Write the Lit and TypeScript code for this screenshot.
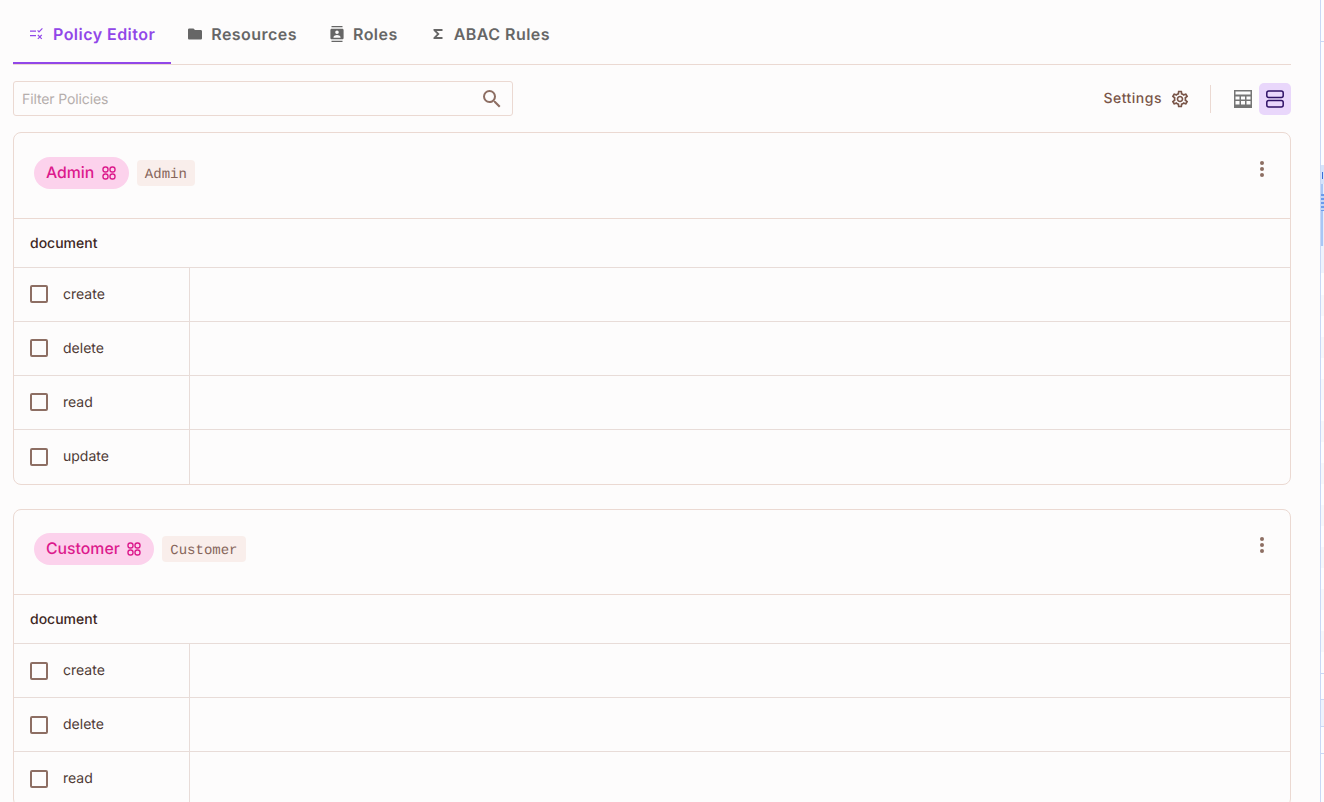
import { LitElement, html, css, svg } from "lit";
import { customElement } from "lit/decorators.js";

const policies = [
  { name: "Admin", actions: ["create", "delete", "read", "update"] },
  { name: "Customer", actions: ["create", "delete", "read"] },
];

const strip: [number, string][] = [
  [41, "w"], [1, "l"], [123, "w"], [19, "h"], [62, "b"], [27, "p"], [22, "w"],
  ...Array.from({ length: 9 }, () => [[21, "s"], [21, "w"]] as [number, string][]).flat(),
  [1, "l"], [25, "w"], [1, "l"], [26, "p"], [1, "l"], [26, "w"], [1, "l"], [70, "w"],
];

@customElement("app-root")
export class AppRoot extends LitElement {
  static styles = css`
    :host { display: block; height: 802px; overflow: hidden; background: #fdfcfc; font-family: Inter, "Liberation Sans", sans-serif; color: #3e2723; text-rendering: geometricPrecision; }
    .page { display: flex; height: 802px; }
    .main { width: 1320px; box-sizing: border-box; padding: 0 29px 0 13px; flex: none; }
    .side { flex: 1; border-left: 1px solid #c9d8f6; display: flex; flex-direction: column; overflow: hidden; }
    .s-w { background: #fdfdfe; } .s-l { background: #c9d8f6; }
    .s-h { background: #d5e3fa; padding-top: 7px; box-sizing: border-box; }
    .s-h::before { content: ""; display: block; width: 1px; height: 7px; margin-left: 1px; background: #3b6fd8; }
    .s-b { background: linear-gradient(90deg, #a9c6f5 2px, #e6eefc 2px); padding-top: 10px; box-sizing: border-box; }
    .s-b::before { content: ""; display: block; width: 3px; height: 17px; background: repeating-linear-gradient(180deg, #6c9bec 0 2px, #c3d6f7 2px 4px); }
    .s-p { background: #eef3fc; } .s-s { background: #f6f7fa; }
    .tabs { display: flex; height: 65px; box-sizing: border-box; border-bottom: 1px solid #ebd9d2; }
    .tab { display: flex; align-items: center; gap: 8px; height: 64px; box-sizing: border-box; padding: 4px 16px 0; font-size: 16px; font-weight: 600; letter-spacing: 0.46px; color: #666; }
    .tab.on { color: #9147e8; border-bottom: 2px solid #9147e8; padding-top: 6px; }
    .tab svg { width: 16px; height: 16px; fill: currentColor; flex: none; }
    .toolbar { display: flex; align-items: center; height: 35px; margin: 16px 0; }
    .filter { width: 500px; height: 35px; box-sizing: border-box; border: 1px solid #ebd9d2; border-radius: 3px; display: flex; align-items: center; justify-content: space-between; padding: 0 9px 0 8px; font-size: 14px; letter-spacing: -0.12px; color: #b5aeac; }
    .filter span { padding-top: 2px; }
    .filter svg { width: 24px; height: 24px; fill: #8d6e63; margin-right: -1px; }
    .right { margin-left: auto; display: flex; align-items: center; }
    .settings { font-size: 14px; font-weight: 500; letter-spacing: 0.5px; color: #795548; display: flex; align-items: center; gap: 8px; }
    .settings svg { width: 20px; height: 20px; fill: #795548; }
    .vr { width: 1px; height: 28px; background: #ebd9d2; margin: 0 16px 0 20px; }
    .view { width: 32px; height: 32px; border-radius: 5px; display: flex; align-items: center; justify-content: center; }
    .view svg { width: 24px; height: 24px; }
    .view.on { background: #e9d7fb; }
    .card { border: 1px solid #ebd9d2; border-radius: 8px; margin-bottom: 24px; overflow: hidden; }
    .head { height: 86px; box-sizing: border-box; border-bottom: 1px solid #ebd9d2; padding: 24px 20px 0; display: flex; align-items: flex-start; gap: 8px; }
    .card + .card .head { height: 85px; padding-top: 23px; }
    .chip { height: 32px; box-sizing: border-box; border-radius: 16px; background: #fcd2ec; color: #dc1a8c; font-size: 15.8px; font-weight: 500; padding: 0 12px 1px; display: flex; align-items: center; gap: 6.5px; }
    .chip svg { width: 16px; height: 16px; fill: none; stroke: #dc1a8c; stroke-width: 1.4; margin-top: 1px; }
    .code { height: 26px; margin-top: 3px; padding: 3px 8px 0; box-sizing: border-box; border-radius: 4px; background: #f9eeeb; color: #86655a; font-family: "Liberation Mono", monospace; font-size: 14px; display: flex; align-items: center; }
    .more { margin-left: auto; width: 24px; height: 24px; fill: #8d6e63; margin-right: -4px; }
    .res { height: 49px; box-sizing: border-box; border-bottom: 1px solid #e8dcd8; padding-left: 16px; display: flex; align-items: center; font-size: 14px; font-weight: 500; color: #3e2723; }
    .row { height: 54px; box-sizing: border-box; border-bottom: 1px solid #e8dcd8; display: flex; font-size: 14px; color: #4e3a35; }
    .act { width: 176px; box-sizing: border-box; border-right: 1px solid #e8dcd8; padding-left: 16px; display: flex; align-items: center; gap: 15px; }
    .box { width: 18px; height: 18px; box-sizing: border-box; border: 2px solid #8d6e63; border-radius: 2px; flex: none; }
    .card:not(.card + .card) .row:not(:last-child) .box { margin-bottom: 1px; }
    .card:not(.card + .card) .row:last-child { border-bottom: 0; }
    .card:not(.card + .card) .row:last-child .act { padding-bottom: 1px; }
  `;

  private grid() {
    return html`<svg viewBox="0 0 24 24"><path fill="#757575" d="M3 3h18v18H3zm1.500 1.500v3h15v-3zm0 5v3h4v-3zm5.500 0v3h4v-3zm5.500 0v3h4v-3zm-11 4.500v3.500h4V14zm5.500 0v3.500h4V14zm5.500 0v3.500h4V14z" fill-rule="evenodd"/></svg>`;
  }

  private card(p: { name: string; actions: string[] }) {
    return html`<section class="card">
      <div class="head">
        <div class="chip">${p.name}
          <svg viewBox="0 0 16 16"><rect x="2" y="2" width="5" height="5" rx="2.200"/><rect x="9" y="2" width="5" height="5" rx="2.200"/><rect x="2" y="9" width="5" height="5" rx="2.200"/><rect x="9" y="9" width="5" height="5" rx="2.200"/></svg>
        </div>
        <div class="code">${p.name}</div>
        <svg class="more" viewBox="0 0 24 24"><circle cx="12" cy="6" r="2"/><circle cx="12" cy="12" r="2"/><circle cx="12" cy="18" r="2"/></svg>
      </div>
      <div class="res">document</div>
      ${p.actions.map((a) => html`<div class="row"><div class="act"><span class="box"></span>${a}</div></div>`)}
    </section>`;
  }

  render() {
    return html`<div class="page">
      <div class="main">
        <nav class="tabs">
          <div class="tab on"><svg viewBox="0 0 16 16">${svg`<path d="M1 4.500h6v1.300H1zM1 9h6v1.300H1zM9 4l1 1 3-3 .8.800L10 6.700 8.200 4.800zM9.200 8.500l1.600 1.600 1.600-1.600.8.800-1.600 1.600 1.600 1.600-.8.800-1.600-1.600-1.600 1.600-.8-.8 1.600-1.600-1.600-1.600z"/>`}</svg>Policy Editor</div>
          <div class="tab"><svg viewBox="0 0 16 16"><path d="M6.500 2.500H2.300C1.500 2.500 1 3.100 1 3.800v8.400c0 .7.600 1.300 1.300 1.300h11.400c.7 0 1.300-.6 1.300-1.300V5.200c0-.7-.6-1.300-1.300-1.300H8z"/></svg>Resources</div>
          <div class="tab"><svg viewBox="0 0 16 16"><path fill-rule="evenodd" d="M2.500 0h11v1.300h-11zM2.500 14.700h11V16h-11zM2.700 2.700h10.600c.7 0 1.300.6 1.300 1.300v8c0 .7-.6 1.300-1.300 1.300H2.700c-.7 0-1.300-.6-1.300-1.300V4c0-.7.6-1.300 1.300-1.300zM8 4.500a1.800 1.800 0 1 0 0 3.600 1.800 1.800 0 0 0 0-3.600zM4.500 11.700h7v-.8c0-1.300-2.300-2-3.500-2s-3.500.7-3.500 2z"/></svg>Roles</div>
          <div class="tab"><svg viewBox="0 0 16 16"><path d="M3.500 3h9v2H6.600l3 3-3 3h5.900v2h-9v-1.600L7 8 3.500 4.600z"/></svg>ABAC Rules</div>
        </nav>
        <div class="toolbar">
          <div class="filter"><span>Filter Policies</span>
            <svg viewBox="0 0 24 24"><path d="M15.500 14h-.79l-.28-.27A6.470 6.470 0 0 0 16 9.500 6.500 6.500 0 1 0 9.500 16c1.610 0 3.090-.59 4.230-1.570l.27.28v.79l5 4.990L20.490 19zm-6 0C7.010 14 5 11.990 5 9.500S7.010 5 9.500 5 14 7.010 14 9.500 11.990 14 9.500 14z"/></svg>
          </div>
          <div class="right">
            <div class="settings">Settings
              <svg viewBox="0 0 24 24"><path d="M19.430 12.980c.04-.32.070-.64.070-.98s-.030-.66-.07-.98l2.110-1.650c.19-.15.240-.42.120-.64l-2-3.460a.5.500 0 0 0-.61-.22l-2.490 1c-.52-.4-1.080-.73-1.690-.98l-.38-2.650A.49.490 0 0 0 14 2h-4c-.25 0-.46.180-.49.420l-.38 2.650c-.61.250-1.170.59-1.690.98l-2.490-1a.5.500 0 0 0-.61.220l-2 3.460c-.13.220-.07.490.12.640l2.110 1.650c-.04.320-.07.650-.07.980s.03.660.07.980l-2.110 1.650c-.19.150-.24.420-.12.640l2 3.460c.12.220.39.300.61.220l2.490-1c.52.4 1.080.73 1.690.98l.38 2.650c.03.240.24.420.49.420h4c.25 0 .46-.18.490-.42l.38-2.650c.61-.25 1.170-.59 1.690-.98l2.490 1c.23.090.49 0 .61-.22l2-3.460c.12-.22.070-.49-.12-.64zm-1.980-1.710c.04.310.05.520.05.730s-.02.430-.05.730l-.14 1.130.89.700 1.080.84-.7 1.210-1.270-.51-1.040-.42-.9.680c-.43.320-.84.560-1.250.73l-1.060.43-.16 1.130-.2 1.350h-1.400l-.19-1.350-.16-1.130-1.060-.43c-.43-.18-.83-.41-1.230-.71l-.91-.7-1.060.43-1.270.51-.7-1.210 1.080-.84.890-.7-.14-1.130c-.03-.31-.05-.54-.05-.74s.02-.43.05-.73l.14-1.130-.89-.7-1.080-.84.7-1.210 1.270.51 1.040.42.9-.68c.43-.32.84-.56 1.250-.73l1.060-.43.16-1.130.2-1.350h1.390l.19 1.350.16 1.130 1.060.43c.43.18.83.41 1.230.71l.91.7 1.060-.43 1.270-.51.7 1.210-1.070.85-.89.7zM12 8c-2.210 0-4 1.790-4 4s1.790 4 4 4 4-1.790 4-4-1.790-4-4-4zm0 6c-1.100 0-2-.9-2-2s.9-2 2-2 2 .9 2 2-.9 2-2 2z"/></svg>
            </div>
            <div class="vr"></div>
            <div class="view">${this.grid()}</div>
            <div class="view on"><svg viewBox="0 0 24 24"><rect x="3.800" y="4" width="16.400" height="6.500" rx="2" fill="none" stroke="#2f1266" stroke-width="1.500"/><rect x="3.800" y="13.500" width="16.400" height="6.500" rx="2" fill="none" stroke="#2f1266" stroke-width="1.500"/></svg></div>
          </div>
        </div>
        ${policies.map((p) => this.card(p))}
      </div>
      <aside class="side">
        ${strip.map(([h, c]) => html`<div class="s-${c}" style="flex:none;height:${h}px"></div>`)}
      </aside>
    </div>`;
  }
}
